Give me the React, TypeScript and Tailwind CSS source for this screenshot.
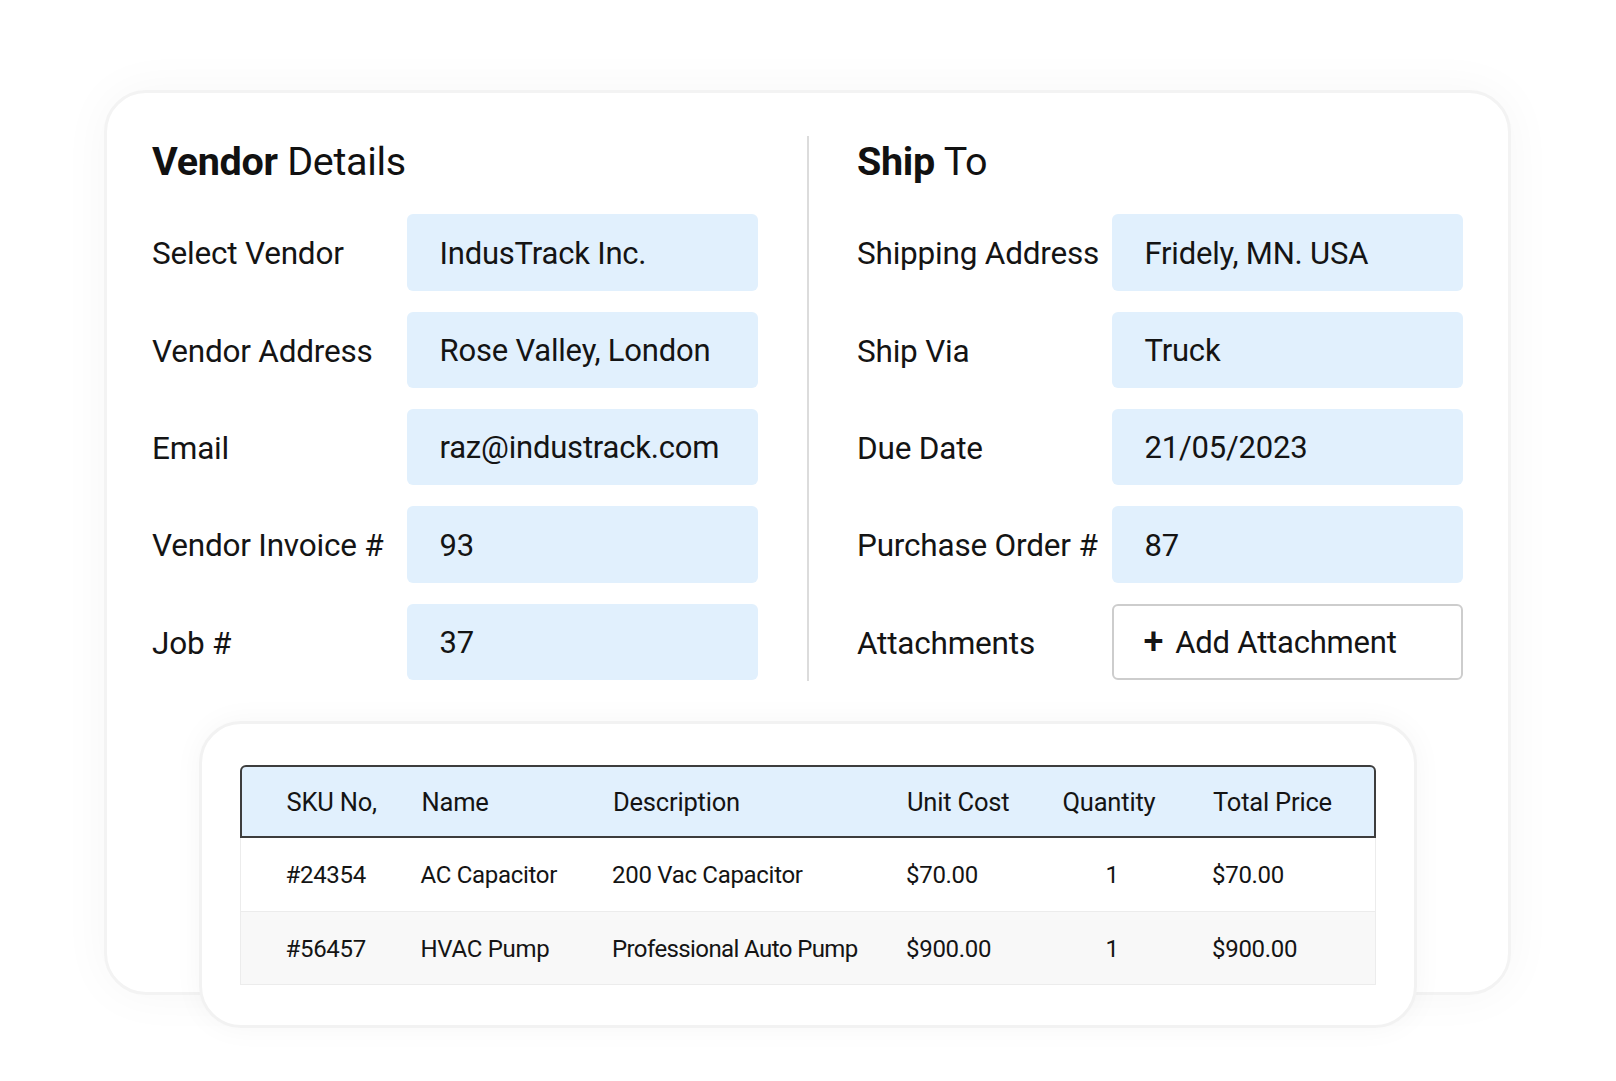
import React from "react";

const leftRows = [
  ["Select Vendor", "IndusTrack Inc."],
  ["Vendor Address", "Rose Valley, London"],
  ["Email", "raz@industrack.com"],
  ["Vendor Invoice #", "93"],
  ["Job #", "37"],
];

const rightRows = [
  ["Shipping Address", "Fridely, MN. USA"],
  ["Ship Via", "Truck"],
  ["Due Date", "21/05/2023"],
  ["Purchase Order #", "87"],
];

const cols = "grid grid-cols-[135px_191.5px_294px_155.5px_150.5px_1fr] pl-[45px] items-center";

function Field({ label, value }: { label: string; value: string }) {
  return (
    <div className="flex items-center h-[76.3px]">
      <div className="w-[254.5px] shrink-0 pt-[3px] text-[31.5px] text-[#141414] tracking-[-0.2px]">{label}</div>
      <div className="w-[351.5px] h-full rounded-[6px] bg-[#e1f0fd] flex items-center pl-[33px] pt-[3px] text-[31px] text-[#141414] tracking-[-0.2px]">
        {value}
      </div>
    </div>
  );
}

export default function App() {
  return (
    <div
      className="min-h-[1081px] bg-white pt-[90px] pl-[104px]"
      style={{ fontFamily: "Roboto, 'Liberation Sans', sans-serif" }}
    >
      <div className="w-[1407px] rounded-[42px] border-[3px] border-[#f3f3f3] bg-white shadow-[0_0_50px_rgba(0,0,0,0.04)] pt-[43px] px-[45px]">
        <div className="grid grid-cols-[606px_1fr_606px]">
          <div className="flex flex-col">
            <div className="h-[52px] leading-[52px] text-[39.5px] text-[#111] tracking-[-0.3px] mb-[26.3px]">
              <span className="font-bold">Vendor</span> Details
            </div>
            <div className="flex flex-col gap-[21.1px]">
              {leftRows.map(([l, v]) => (
                <Field key={l} label={l} value={v} />
              ))}
            </div>
          </div>
          <div className="flex justify-center">
            <div className="w-[2px] bg-[#dcdcdc] h-[545px]" />
          </div>
          <div className="flex flex-col">
            <div className="h-[52px] leading-[52px] text-[39.5px] text-[#111] tracking-[-0.3px] mb-[26.3px]">
              <span className="font-bold">Ship</span> To
            </div>
            <div className="flex flex-col gap-[21.1px]">
              {rightRows.map(([l, v]) => (
                <Field key={l} label={l} value={v} />
              ))}
              <div className="flex items-center h-[76.3px]">
                <div className="w-[254.5px] shrink-0 pt-[3px] text-[31.5px] text-[#141414] tracking-[-0.2px]">Attachments</div>
                <div className="w-[351.5px] h-full rounded-[6px] border-2 border-[#cdcdcd] bg-white flex items-center pl-[30px] pt-[3px] text-[31px] text-[#141414] tracking-[-0.2px]">
                  <span className="text-[36px] leading-none font-medium mr-[12px] -mt-[3px]">+</span>Add Attachment
                </div>
              </div>
            </div>
          </div>
        </div>

        <div className="mt-[39.5px] mx-[46.5px] mb-[-36.5px] relative rounded-[42px] border-[3px] border-[#f2f2f2] bg-white shadow-[0_0_30px_rgba(0,0,0,0.04)] px-[38px] pt-[41px] pb-[40px]">
          <div className="text-[24px] text-[#141414] tracking-[-0.3px]">
            <div className={`${cols} h-[73.5px] pt-[2px] bg-[#e1f0fd] border-2 border-[#3d3d3d] rounded-t-[6px] text-[25.5px] tracking-[-0.2px]`}>
              <div>SKU No,</div>
              <div>Name</div>
              <div>Description</div>
              <div>Unit Cost</div>
              <div>Quantity</div>
              <div>Total Price</div>
            </div>
            <div className={`${cols} h-[73.5px] pt-[2px] bg-white border-x border-b border-[#ececec]`}>
              <div>#24354</div>
              <div>AC Capacitor</div>
              <div>200 Vac Capacitor</div>
              <div>$70.00</div>
              <div className="w-[101px] text-center">1</div>
              <div>$70.00</div>
            </div>
            <div className={`${cols} h-[73.5px] pt-[2px] bg-[#f8f8f8] border-x border-b border-[#ececec]`}>
              <div>#56457</div>
              <div>HVAC Pump</div>
              <div className="tracking-[-0.6px]">Professional Auto Pump</div>
              <div>$900.00</div>
              <div className="w-[101px] text-center">1</div>
              <div>$900.00</div>
            </div>
          </div>
        </div>
      </div>
    </div>
  );
}
